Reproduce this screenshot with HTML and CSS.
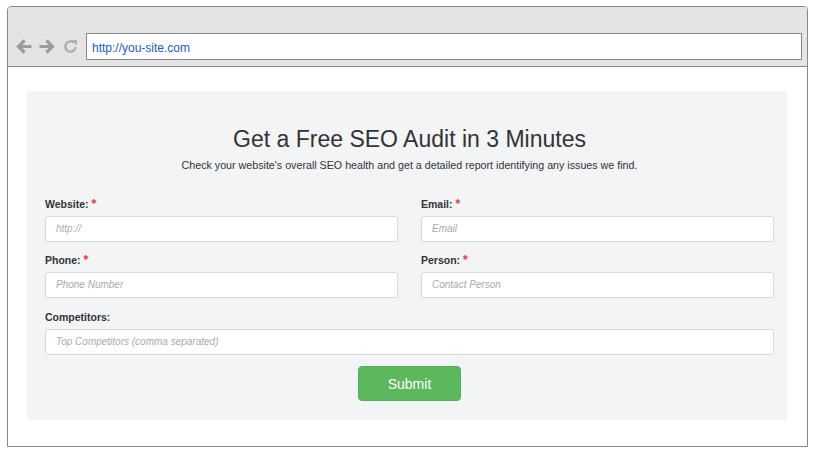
FILE: index.html
```html
<!DOCTYPE html>
<html>
<head>
<meta charset="utf-8">
<link rel="stylesheet" href="styles.css">
</head>
<body>
<div class="frame">
  <div class="topbar">
    <div class="nav">
      <svg class="ico" width="17" height="15" viewBox="0 0 17 15"><path d="M16.5 7.5H3M9.5 1.5l-6 6 6 6" fill="none" stroke="#9c9c9c" stroke-width="3.2"/></svg>
      <svg class="ico" width="17" height="15" viewBox="0 0 17 15"><path d="M0.5 7.5H14M7.5 1.5l6 6-6 6" fill="none" stroke="#9c9c9c" stroke-width="3.2"/></svg>
      <svg class="ico" width="15" height="15" viewBox="0 0 15 15"><path d="M12.6 8.2A5.2 5.2 0 1 1 10.6 3.4" fill="none" stroke="#aaa" stroke-width="2.2"/><path d="M8.6 1.2h5.4v5.4z" fill="#aaa"/></svg>
    </div>
    <div class="address">http://you-site.com</div>
  </div>
  <div class="content">
    <div class="panel">
      <h1 class="title">Get a Free SEO Audit in 3 Minutes</h1>
      <p class="sub">Check your website's overall SEO health and get a detailed report identifying any issues we find.</p>
      <div class="grid">
        <div class="field">
          <label class="lbl">Website: <span class="req">*</span></label>
          <div class="input">http://</div>
        </div>
        <div class="field">
          <label class="lbl">Email: <span class="req">*</span></label>
          <div class="input">Email</div>
        </div>
        <div class="field">
          <label class="lbl">Phone: <span class="req">*</span></label>
          <div class="input">Phone Number</div>
        </div>
        <div class="field">
          <label class="lbl">Person: <span class="req">*</span></label>
          <div class="input">Contact Person</div>
        </div>
        <div class="field wide">
          <label class="lbl">Competitors:</label>
          <div class="input">Top Competitors (comma separated)</div>
        </div>
      </div>
      <div class="actions"><button class="submit">Submit</button></div>
    </div>
  </div>
</div>
</body>
</html>
```
FILE: styles.css
```css
* { box-sizing: border-box; }
html, body { margin: 0; padding: 0; background: #fff; }
body { font-family: "Liberation Sans", Arial, sans-serif; }
.frame {
  margin: 6px 0 0 7px;
  width: 801px;
  height: 441px;
  border: 1px solid #888;
  border-radius: 4px 4px 0 0;
  overflow: hidden;
}
.topbar {
  height: 60px;
  background: #e4e4e4;
  border-bottom: 1px solid #888;
  display: flex;
  align-items: flex-end;
  padding: 0 5px 6px 7px;
}
.nav {
  display: flex;
  align-items: center;
  gap: 7px;
  height: 27px;
  margin-right: 8px;
}
.ico { display: block; }
.address {
  flex: 1;
  height: 27px;
  background: #fff;
  border: 1px solid #888;
  font-size: 12px;
  color: #1a5ad8;
  line-height: 22px;
  padding: 3px 0 0 5px;
}
.content { padding: 24px 0 0 19px; }
.panel {
  width: 760px;
  height: 329px;
  background: #f3f4f6;
  padding: 34px 13px 0 18px;
}
.title {
  margin: 0;
  font-weight: normal;
  font-size: 23px;
  line-height: 28px;
  color: #333;
  text-align: center;
}
.sub {
  margin: 5px 0 0;
  font-size: 10.7px;
  line-height: 14px;
  color: #333;
  text-align: center;
}
.grid {
  display: grid;
  grid-template-columns: 353px 353px;
  column-gap: 23px;
  row-gap: 11px;
  margin-top: 25px;
}
.wide { grid-column: 1 / 3; margin-top: 1px; }
.lbl {
  display: block;
  font-size: 10.5px;
  font-weight: bold;
  line-height: 14px;
  color: #333;
  margin-bottom: 5px;
}
.req { color: #e33; font-size: 12px; }
.input {
  height: 26px;
  background: #fff;
  border: 1px solid #d9d9d9;
  border-radius: 3px;
  font-size: 10px;
  font-style: italic;
  color: #aaa;
  line-height: 24px;
  padding-left: 10px;
}
.actions { display: flex; justify-content: center; margin-top: 11px; }
.submit {
  width: 103px;
  height: 35px;
  background: #5cb85c;
  border: 1px solid #57b057;
  border-radius: 4px;
  color: #fff;
  font-family: "Liberation Sans", Arial, sans-serif;
  font-size: 14px;
}
```
